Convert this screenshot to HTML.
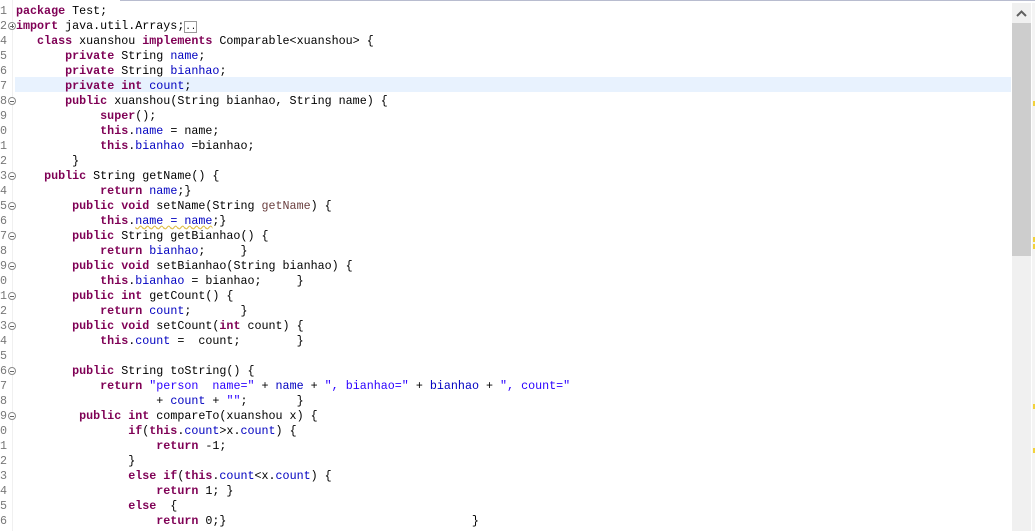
<!DOCTYPE html>
<html><head><meta charset="utf-8"><style>
html,body{margin:0;padding:0;background:#fff;width:1035px;height:531px;overflow:hidden;position:relative}
.top{position:absolute;left:120px;top:0;width:915px;height:1px;background:#b8bccf}
.gl{position:absolute;left:12px;top:0;width:1px;height:531px;background:#f0f0f0}
.hl{position:absolute;left:15px;top:77px;width:996px;height:15px;background:#e8f2fe}
.code{position:absolute;left:16px;top:4px;margin:0;font-family:"Liberation Mono",monospace;font-size:11.7px;line-height:15px;color:#000;white-space:pre}
.num{position:absolute;left:-3px;top:4px;margin:0;font-family:"Liberation Mono",monospace;font-size:11.7px;line-height:15px;color:#787878;white-space:pre;text-align:right;width:10px}
.k{color:#7f0055;font-weight:bold}
.f{color:#0000c0}
.s{color:#2a00ff}
.v{color:#6a3e3e}
.fold{position:absolute;left:8px;width:6px;height:6px;border:1px solid #8a8a8a;border-radius:50%;background:#fff}
.fold:after{content:"";position:absolute;left:1px;top:2.5px;width:4px;height:1px;background:#666}
.plus:before{content:"";position:absolute;left:2.5px;top:1px;width:1px;height:4px;background:#666}
.sb{position:absolute;left:1012px;top:3px;width:19px;height:528px;background:#f0f0f0}
.th{position:absolute;left:1012px;top:23px;width:19px;height:233px;background:#cdcdcd}
.ov{position:absolute;left:1032px;top:3px;width:3px;height:528px;background:#f4f4f4}
.mk{position:absolute;left:1033px;width:2px;height:5px;background:#f2d23c}
</style></head><body>
<div class="top"></div>
<div class="gl"></div>
<div class="hl"></div>
<pre class="num">1
2
4
5
6
7
8
9
0
1
2
3
4
5
6
7
8
9
0
1
2
3
4
5
6
7
8
9
0
1
2
3
4
5
6</pre>
<div class="fold plus" style="top:22px"></div>
<div class="fold" style="top:97px"></div>
<div class="fold" style="top:172px"></div>
<div class="fold" style="top:202px"></div>
<div class="fold" style="top:232px"></div>
<div class="fold" style="top:262px"></div>
<div class="fold" style="top:292px"></div>
<div class="fold" style="top:322px"></div>
<div class="fold" style="top:367px"></div>
<div class="fold" style="top:412px"></div>
<pre class="code"><span class="k">package</span> Test;
<span class="k">import</span> java.util.Arrays;<span style="border:1px solid #999;font-size:9px;line-height:9px">..</span>
   <span class="k">class</span> xuanshou <span class="k">implements</span> Comparable&lt;xuanshou&gt; {
       <span class="k">private</span> String <span class="f">name</span>;
       <span class="k">private</span> String <span class="f">bianhao</span>;
       <span class="k">private</span> <span class="k">int</span> <span class="f">count</span>;
       <span class="k">public</span> xuanshou(String bianhao, String name) {
            <span class="k">super</span>();
            <span class="k">this</span>.<span class="f">name</span> = name;
            <span class="k">this</span>.<span class="f">bianhao</span> =bianhao;
        }
    <span class="k">public</span> String getName() {
            <span class="k">return</span> <span class="f">name</span>;}
        <span class="k">public</span> <span class="k">void</span> setName(String <span class="v">getName</span>) {
            <span class="k">this</span>.<span class="f" style="text-decoration:underline wavy #e0c050">name = name</span>;}
        <span class="k">public</span> String getBianhao() {
            <span class="k">return</span> <span class="f">bianhao</span>;     }
        <span class="k">public</span> <span class="k">void</span> setBianhao(String bianhao) {
            <span class="k">this</span>.<span class="f">bianhao</span> = bianhao;     }
        <span class="k">public</span> <span class="k">int</span> getCount() {
            <span class="k">return</span> <span class="f">count</span>;       }
        <span class="k">public</span> <span class="k">void</span> setCount(<span class="k">int</span> count) {
            <span class="k">this</span>.<span class="f">count</span> =  count;        }

        <span class="k">public</span> String toString() {
            <span class="k">return</span> <span class="s">"person  name="</span> + <span class="f">name</span> + <span class="s">", bianhao="</span> + <span class="f">bianhao</span> + <span class="s">", count="</span>
                    + <span class="f">count</span> + <span class="s">""</span>;       }
         <span class="k">public</span> <span class="k">int</span> compareTo(xuanshou x) {
                <span class="k">if</span>(<span class="k">this</span>.<span class="f">count</span>&gt;x.<span class="f">count</span>) {
                    <span class="k">return</span> -1;
                }
                <span class="k">else</span> <span class="k">if</span>(<span class="k">this</span>.<span class="f">count</span>&lt;x.<span class="f">count</span>) {
                    <span class="k">return</span> 1; }
                <span class="k">else</span>  {
                    <span class="k">return</span> 0;}                                   }</pre>
<div class="sb"></div>
<div class="th"></div>
<svg style="position:absolute;left:1012px;top:3px" width="19" height="20"><path d="M5 13 L9.5 8.5 L14 13" fill="none" stroke="#606060" stroke-width="2"/></svg>
<div class="ov"></div>
<div class="mk" style="top:101px"></div>
<div class="mk" style="top:237px"></div>
<div class="mk" style="top:244px"></div>
<div class="mk" style="top:404px"></div>
<div class="mk" style="top:448px"></div>
</body></html>
